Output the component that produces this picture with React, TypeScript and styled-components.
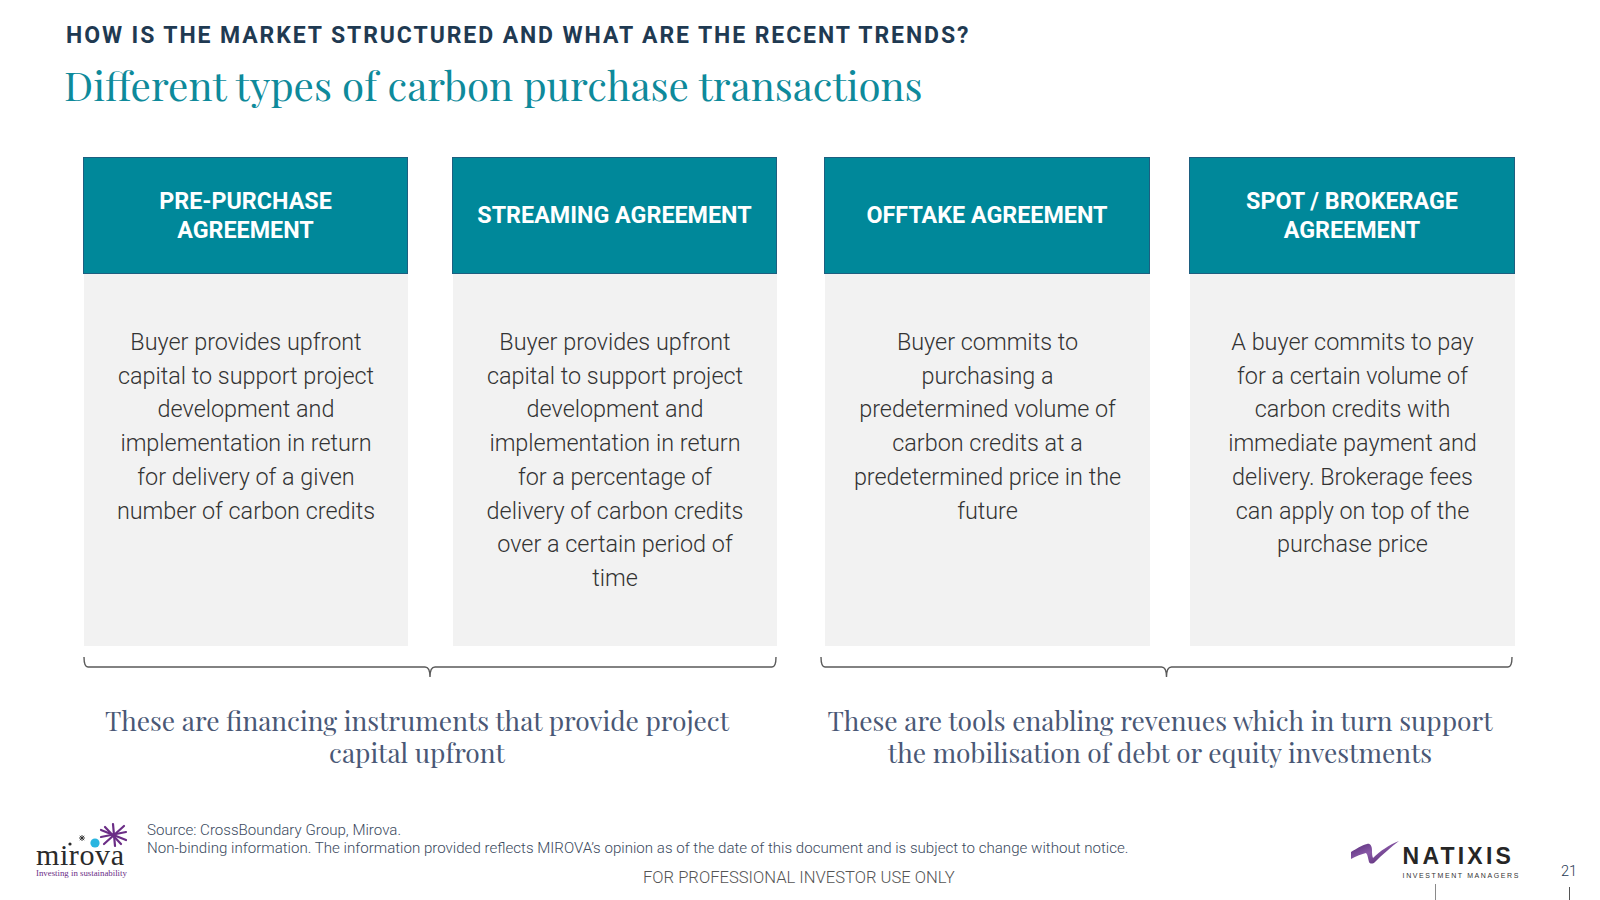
import React from "react";
import styled, { createGlobalStyle } from "styled-components";

const GlobalStyle = createGlobalStyle`
  html, body { margin: 0; padding: 0; background: #ffffff; }
  body { font-family: Roboto, "Liberation Sans", sans-serif; }
  * { box-sizing: border-box; }
`;

const Page = styled.div`
  width: 1600px;
  height: 900px;
  overflow: hidden;
  display: flex;
  flex-direction: column;
  background: #ffffff;
`;

const Header = styled.header`
  padding: 22px 0 0 66px;
`;

const Kicker = styled.h2`
  margin: 0;
  font-family: Roboto, "Liberation Sans", sans-serif;
  font-weight: 700;
  font-size: 23px;
  line-height: 28px;
  letter-spacing: 1.9px;
  color: #1f3a52;
`;

const Title = styled.h1`
  margin: 9px 0 0 -2px;
  font-family: "Playfair Display", "Liberation Serif", "DejaVu Serif", serif;
  font-weight: 400;
  font-size: 40.3px;
  line-height: 50px;
  color: #0e8a9b;
`;

const Main = styled.main`
  display: flex;
  gap: 47px;
  padding-left: 83px;
  margin-top: 48px;
`;

const Group = styled.section`
  display: flex;
  flex-direction: column;
`;

const Cards = styled.div<{ $col: number; $gap: number }>`
  display: grid;
  grid-template-columns: repeat(2, ${(p) => p.$col}px);
  column-gap: ${(p) => p.$gap}px;
`;

const Card = styled.article`
  display: flex;
  flex-direction: column;
`;

const CardHead = styled.div`
  height: 117px;
  background: #00889a;
  border: 1px solid #1d5f80;
  display: flex;
  align-items: center;
  justify-content: center;
  text-align: center;
  color: #ffffff;
  font-family: Roboto, "Liberation Sans", sans-serif;
  font-weight: 700;
  font-size: 23.3px;
  line-height: 28.6px;
  padding: 0 8px;
`;

const CardBody = styled.div`
  height: 372px;
  background: #f2f2f2;
  margin-left: 1px;
  padding-top: 52px;
  text-align: center;
  color: #333333;
  font-family: Roboto, "Liberation Sans", sans-serif;
  font-weight: 300;
  font-size: 23.4px;
  line-height: 33.7px;
`;

const Brace = styled.svg<{ $offset: number }>`
  display: block;
  margin-top: 11px;
  margin-left: ${(p) => p.$offset}px;
`;

const Caption = styled.p<{ $shift: number }>`
  margin: 26px 0 0 0;
  padding-right: ${(p) => p.$shift}px;
  text-align: center;
  font-family: "Playfair Display", "Liberation Serif", "DejaVu Serif", serif;
  font-weight: 400;
  font-size: 26.4px;
  line-height: 32.2px;
  color: #4a5876;
`;

const Footer = styled.footer`
  margin-top: auto;
  height: 90px;
  display: flex;
  align-items: flex-start;
  padding-left: 36px;
`;

const Mirova = styled.div`
  width: 90px;
  margin-top: 12px;
  display: flex;
  flex-direction: column;
  align-items: flex-start;
`;

const MirovaMark = styled.svg`
  display: block;
  margin-left: 30px;
`;

const MirovaWord = styled.div`
  margin-top: -3px;
  font-family: "Liberation Serif", "DejaVu Serif", serif;
  font-size: 30px;
  line-height: 20px;
  letter-spacing: 0.6px;
  color: #2a2a2a;
`;

const MirovaTag = styled.div`
  margin-top: 3px;
  font-family: "Liberation Serif", "DejaVu Serif", serif;
  font-size: 8.8px;
  line-height: 10px;
  color: #6b2d86;
  white-space: nowrap;
`;

const Notes = styled.div`
  margin-left: 21px;
  padding-top: 11px;
  display: flex;
  flex-direction: column;
  flex: 1;
`;

const NoteLine = styled.div`
  font-family: Roboto, "Liberation Sans", sans-serif;
  font-weight: 300;
  font-size: 15.1px;
  line-height: 18px;
  color: #3b4a5e;
  white-space: nowrap;
`;

const Professional = styled.div`
  margin-top: 12px;
  padding-left: 496px;
  font-family: Roboto, "Liberation Sans", sans-serif;
  font-weight: 300;
  font-size: 16.6px;
  line-height: 18px;
  color: #555555;
  white-space: nowrap;
`;

const Natixis = styled.div`
  display: flex;
  align-items: flex-start;
  margin-top: 30px;
  position: relative;
  &::after {
    content: "";
    position: absolute;
    left: 84px;
    top: 44px;
    width: 1px;
    height: 16px;
    background: #8a8a8a;
  }
`;

const NatixisText = styled.div`
  display: flex;
  flex-direction: column;
  margin-left: 4px;
  padding-top: 5px;
`;

const NatixisWord = styled.div`
  font-family: "Liberation Sans", Arial, sans-serif;
  font-weight: 700;
  font-size: 23px;
  line-height: 23px;
  letter-spacing: 3.2px;
  margin-right: -3px;
  color: #262626;
`;

const NatixisSub = styled.div`
  margin-top: 3px;
  font-family: "Liberation Sans", Arial, sans-serif;
  font-size: 7px;
  line-height: 9px;
  letter-spacing: 1.6px;
  color: #333333;
  white-space: nowrap;
`;

const PageNum = styled.div`
  margin: 53px 0 0 41px;
  width: 39px;
  font-family: Roboto, "Liberation Sans", sans-serif;
  font-weight: 300;
  font-size: 14.5px;
  line-height: 18px;
  color: #1f3a52;
  position: relative;
  &::after {
    content: "";
    position: absolute;
    left: 8px;
    top: 24px;
    width: 1px;
    height: 14px;
    background: #555;
  }
`;

type CardData = { title: string[]; body: string[] };

const group1: CardData[] = [
  {
    title: ["PRE-PURCHASE", "AGREEMENT"],
    body: [
      "Buyer provides upfront",
      "capital to support project",
      "development and",
      "implementation in return",
      "for delivery of a given",
      "number of carbon credits",
    ],
  },
  {
    title: ["STREAMING AGREEMENT"],
    body: [
      "Buyer provides upfront",
      "capital to support project",
      "development and",
      "implementation in return",
      "for a percentage of",
      "delivery of carbon credits",
      "over a certain period of",
      "time",
    ],
  },
];

const group2: CardData[] = [
  {
    title: ["OFFTAKE AGREEMENT"],
    body: [
      "Buyer commits to",
      "purchasing a",
      "predetermined volume of",
      "carbon credits at a",
      "predetermined price in the",
      "future",
    ],
  },
  {
    title: ["SPOT / BROKERAGE", "AGREEMENT"],
    body: [
      "A buyer commits to pay",
      "for a certain volume of",
      "carbon credits with",
      "immediate payment and",
      "delivery. Brokerage fees",
      "can apply on top of the",
      "purchase price",
    ],
  },
];

const Lines: React.FC<{ lines: string[] }> = ({ lines }) => (
  <>
    {lines.map((l, i) => (
      <React.Fragment key={i}>
        {l}
        {i < lines.length - 1 && <br />}
      </React.Fragment>
    ))}
  </>
);

const BraceShape: React.FC<{ width: number; offset: number }> = ({ width, offset }) => {
  const mid = width / 2;
  const w = width - 1;
  return (
    <Brace $offset={offset} width={width} height={21} viewBox={`0 0 ${width} 21`}>
      <path
        d={`M1 0 Q1 10 5 10 H${mid - 5} Q${mid} 10 ${mid} 20 Q${mid} 10 ${mid + 5} 10 H${w - 4} Q${w} 10 ${w} 0`}
        fill="none"
        stroke="#5a5a5a"
        strokeWidth={1.4}
      />
    </Brace>
  );
};

const CardGroup: React.FC<{
  cards: CardData[];
  col: number;
  gap: number;
  braceWidth: number;
  braceOffset: number;
  caption: string[];
  shift: number;
}> = ({ cards, col, gap, braceWidth, braceOffset, caption, shift }) => (
  <Group>
    <Cards $col={col} $gap={gap}>
      {cards.map((c, i) => (
        <Card key={i}>
          <CardHead>
            <div>
              <Lines lines={c.title} />
            </div>
          </CardHead>
          <CardBody>
            <Lines lines={c.body} />
          </CardBody>
        </Card>
      ))}
    </Cards>
    <BraceShape width={braceWidth} offset={braceOffset} />
    <Caption $shift={shift}>
      <Lines lines={caption} />
    </Caption>
  </Group>
);

const MirovaLogo: React.FC = () => (
  <Mirova>
    <MirovaMark width={62} height={26} viewBox="0 0 62 26">
      <circle cx="4" cy="22" r="1.6" fill="#2a2a2a" />
      <g stroke="#2a2a2a" strokeWidth="0.9">
        <line x1="16" y1="13" x2="16" y2="19" />
        <line x1="13" y1="16" x2="19" y2="16" />
        <line x1="13.8" y1="13.8" x2="18.2" y2="18.2" />
        <line x1="18.2" y1="13.8" x2="13.8" y2="18.2" />
      </g>
      <circle cx="29" cy="21" r="4.6" fill="#29b5e0" />
      <g stroke="#6b2d86" strokeWidth="2.2" strokeLinecap="round">
        <line x1="47" y1="2" x2="49" y2="24" />
        <line x1="35" y1="8" x2="60" y2="18" />
        <line x1="38" y1="22" x2="58" y2="4" />
        <line x1="39" y1="5" x2="55" y2="22" />
        <line x1="35" y1="15" x2="60" y2="10" />
      </g>
    </MirovaMark>
    <MirovaWord>mirova</MirovaWord>
    <MirovaTag>Investing in sustainability</MirovaTag>
  </Mirova>
);

const NatixisLogo: React.FC = () => (
  <Natixis>
    <svg width={48} height={24} viewBox="0 0 48 24">
      <defs>
        <linearGradient id="nx" x1="0" y1="0" x2="1" y2="1">
          <stop offset="0" stopColor="#4e2470" />
          <stop offset="0.45" stopColor="#8a5aa8" />
          <stop offset="1" stopColor="#4a1f66" />
        </linearGradient>
      </defs>
      <path
        d="M0 12 C5 9 11 5 16 4 C19 3 21 6 21 10 C21 13 21 16 22 18 C29 11 38 5 48 1 C40 7 31 15 24 22 C22 24 19 24 18 22 C17 19 17 15 15 13 C11 14 5 16 0 19 Z"
        fill="url(#nx)"
      />
    </svg>
    <NatixisText>
      <NatixisWord>NATIXIS</NatixisWord>
      <NatixisSub>INVESTMENT MANAGERS</NatixisSub>
    </NatixisText>
  </Natixis>
);

export default function App() {
  return (
    <>
      <GlobalStyle />
      <Page>
        <Header>
          <Kicker>HOW IS THE MARKET STRUCTURED AND WHAT ARE THE RECENT TRENDS?</Kicker>
          <Title>Different types of carbon purchase transactions</Title>
        </Header>
        <Main>
          <CardGroup
            cards={group1}
            col={325}
            gap={44}
            braceWidth={694}
            braceOffset={0}
            caption={["These are financing instruments that provide project", "capital upfront"]}
            shift={26}
          />
          <CardGroup
            cards={group2}
            col={326}
            gap={39}
            braceWidth={693}
            braceOffset={-4}
            caption={["These are tools enabling revenues which in turn support", "the mobilisation of debt or equity investments"]}
            shift={19}
          />
        </Main>
        <Footer>
          <MirovaLogo />
          <Notes>
            <NoteLine>Source: CrossBoundary Group, Mirova.</NoteLine>
            <NoteLine>
              Non-binding information. The information provided reflects MIROVA’s opinion as of the date of this
              document and is subject to change without notice.
            </NoteLine>
            <Professional>FOR PROFESSIONAL INVESTOR USE ONLY</Professional>
          </Notes>
          <NatixisLogo />
          <PageNum>21</PageNum>
        </Footer>
      </Page>
    </>
  );
}
